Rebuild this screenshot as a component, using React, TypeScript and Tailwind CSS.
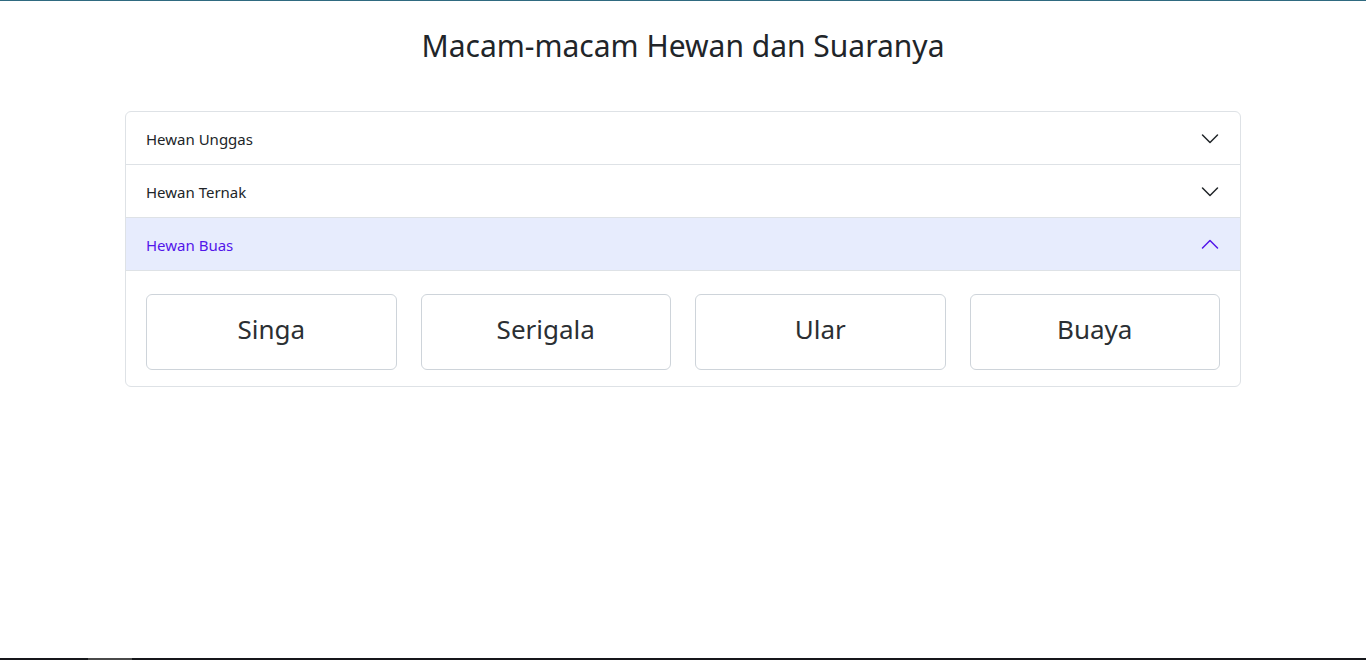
import React from "react";

const Chevron = ({ up, color }: { up?: boolean; color: string }) => (
  <svg width="20" height="20" viewBox="0 0 20 20" fill="none" className="shrink-0">
    {up ? (
      <path d="M2.5 13 10 5.5l7.5 7.5" stroke={color} strokeWidth="1.5" strokeLinecap="round" strokeLinejoin="round" />
    ) : (
      <path d="M2.5 6 10 13.5 17.5 6" stroke={color} strokeWidth="1.5" strokeLinecap="round" strokeLinejoin="round" />
    )}
  </svg>
);

export default function App() {
  const items = ["Singa", "Serigala", "Ular", "Buaya"];
  return (
    <div
      className="w-[1366px] h-[660px] bg-white flex flex-col text-[#212529] border-t border-[#2f6a80]"
      style={{ fontFamily: '"Noto Sans", "Open Sans", sans-serif' }}
    >
      <div className="flex-1 flex flex-col items-center">
        <h2 className="text-[30px] leading-[36px] mt-[27px] mb-[47px] font-normal">Macam-macam Hewan dan Suaranya</h2>
        <div className="w-[1116px] border border-[#dee2e6] rounded-[6px] overflow-hidden">
          <div className="h-[53px] flex items-center justify-between pl-5 pr-[20px] pt-[2px] border-b border-[#dee2e6]">
            <span className="text-[15px]">Hewan Unggas</span>
            <Chevron color="#212529" />
          </div>
          <div className="h-[53px] flex items-center justify-between pl-5 pr-[20px] pt-[2px] border-b border-[#dee2e6]">
            <span className="text-[15px]">Hewan Ternak</span>
            <Chevron color="#212529" />
          </div>
          <div className="h-[53px] flex items-center justify-between pl-5 pr-[20px] pt-[2px] border-b border-[#dee2e6] bg-[#e7ecfd]">
            <span className="text-[15px] text-[#5316ea]">Hewan Buas</span>
            <Chevron up color="#5316ea" />
          </div>
          <div className="pt-[23px] pb-4 px-5 grid grid-cols-4 gap-6">
            {items.map((t) => (
              <div
                key={t}
                className="h-[76px] border border-[#ced4da] rounded-[6px] flex items-center justify-center pb-[5px] text-[26px] text-[#2b2f33]"
              >
                {t}
              </div>
            ))}
          </div>
        </div>
      </div>
      <div className="h-[2px] bg-[#16171b] flex">
        <div className="ml-[88px] w-[44px] bg-[#4a4a4a]" />
      </div>
    </div>
  );
}
